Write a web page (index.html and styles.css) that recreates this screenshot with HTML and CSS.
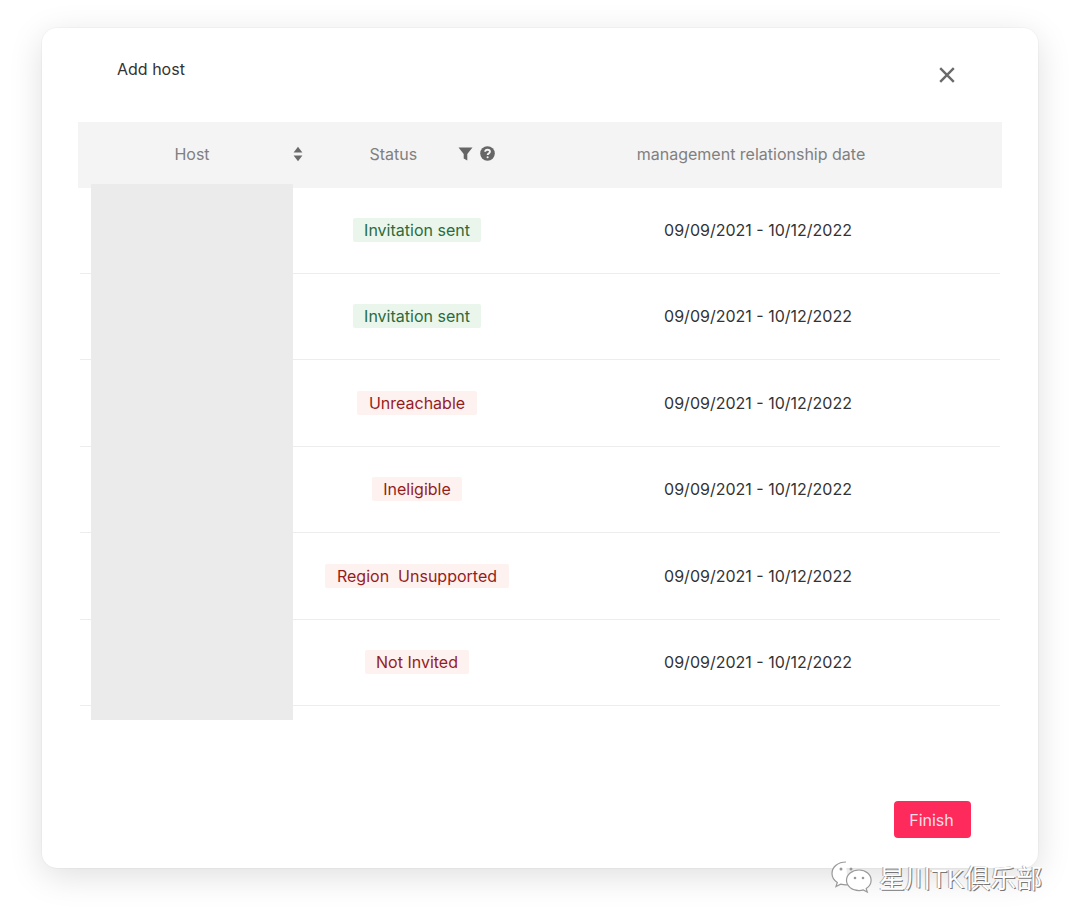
FILE: index.html
```html
<!DOCTYPE html>
<html lang="en">
<head>
<meta charset="utf-8">
<title>Add host</title>
<link rel="stylesheet" href="styles.css">
</head>
<body>
<main class="modal">
  <header class="modal-head">
    <h1 class="modal-title">Add host</h1>
    <svg class="close" viewBox="0 0 16 16" width="16" height="16" aria-hidden="true"><path d="M1.2 1.200 14.800 14.800M14.800 1.200 1.200 14.800"/></svg>
  </header>
  <section class="table">
    <div class="row head">
      <div class="cell host-head"><span>Host</span>
        <svg class="sort" viewBox="0 0 10 16" width="10" height="16" aria-hidden="true"><path d="M5 .8 9.400 6.600H.6ZM5 15.200.6 9.400h8.800Z"/></svg>
      </div>
      <div class="cell status-head"><span>Status</span>
        <svg class="filter" viewBox="0 0 14 14" width="15" height="14" aria-hidden="true"><path d="M0 .5h14L8.800 7V13.500L5.200 11.500V7Z"/></svg>
        <svg class="help" viewBox="0 0 16 16" width="15" height="15" aria-hidden="true"><circle cx="8" cy="8" r="7.800"/><path class="q" d="M5.500 6.200C5.600 4.700 6.600 4 8 4c1.500 0 2.600.8 2.600 2.100 0 1.800-2.500 1.700-2.500 3.500"/><circle class="dot" cx="8.100" cy="12" r="1.100"/></svg>
      </div>
      <div class="cell date-head">management relationship date</div>
    </div>
    <div class="row"><div class="cell"></div><div class="cell status"><span class="tag ok">Invitation sent</span></div><div class="cell date">09/09/2021 - 10/12/2022</div></div>
    <div class="row"><div class="cell"></div><div class="cell status"><span class="tag ok">Invitation sent</span></div><div class="cell date">09/09/2021 - 10/12/2022</div></div>
    <div class="row"><div class="cell"></div><div class="cell status"><span class="tag bad">Unreachable</span></div><div class="cell date">09/09/2021 - 10/12/2022</div></div>
    <div class="row"><div class="cell"></div><div class="cell status"><span class="tag bad">Ineligible</span></div><div class="cell date">09/09/2021 - 10/12/2022</div></div>
    <div class="row"><div class="cell"></div><div class="cell status"><span class="tag bad">Region&nbsp; Unsupported</span></div><div class="cell date">09/09/2021 - 10/12/2022</div></div>
    <div class="row"><div class="cell"></div><div class="cell status"><span class="tag bad">Not Invited</span></div><div class="cell date">09/09/2021 - 10/12/2022</div></div>
    <div class="redact"></div>
  </section>
  <footer class="modal-foot"><button class="finish" type="button">Finish</button></footer>
</main>
<div class="watermark">
  <svg class="wx" viewBox="0 0 44 36" width="44" height="36" aria-hidden="true">
    <path d="M16 3C8 3 2 8 2 14.500c0 3.800 2 6.800 5.300 9l-1.300 4 4.600-2.400c1.800.5 3.500.8 5.400.8.600 0 1 0 1.600-.1"/>
    <path d="M29 11c-7 0-12.500 4.600-12.500 10.300S22 31.600 29 31.600c1.500 0 3-.2 4.300-.7l4 2.200-1.100-3.500c3-2 4.900-4.900 4.900-8.300C41.100 15.600 36 11 29 11Z"/>
    <circle cx="11" cy="10" r="1.500"/><circle cx="21" cy="10" r="1.500"/><circle cx="25" cy="19" r="1.300"/><circle cx="33" cy="19" r="1.300"/>
  </svg>
  <span class="wm-text">星川TK俱乐部</span>
</div>
</body>
</html>
```
FILE: styles.css
```css
* { box-sizing: border-box; }
html, body { margin: 0; padding: 0; }
body {
  width: 1080px;
  height: 924px;
  padding: 28px 42px 0;
  background: #fff;
  font-family: Inter, "Liberation Sans", sans-serif;
  font-size: 16px;
  color: #333;
  position: relative;
  overflow: hidden;
}
.modal {
  width: 996px;
  height: 840px;
  background: #fff;
  border-radius: 15px;
  box-shadow: 0 0 0 1px rgba(0, 0, 0, .025), 0 8px 34px rgba(0, 0, 0, .13);
  padding: 0 36px;
  display: flex;
  flex-direction: column;
}
.modal-head {
  height: 94px;
  display: flex;
  justify-content: space-between;
  padding: 31px 47px 0 39px;
}
.modal-title { margin: 0; font-size: 16px; font-weight: 400; line-height: 20px; color: #333; }
.close { margin-top: 8px; fill: none; stroke: #6a6a6a; stroke-width: 2.400; }
.table { position: relative; }
.row {
  display: grid;
  grid-template-columns: 228px 224px 1fr;
  height: 86.500px;
  padding-bottom: 2px;
  border-bottom: 1px solid transparent;
  background: linear-gradient(#ededed, #ededed) 2px 100% / 920px 1px no-repeat;
  align-items: center;
}
.row.head { height: 66px; padding-bottom: 2px; background: #f4f4f4; color: #808080; }
.cell { display: flex; align-items: center; justify-content: center; }
.host-head { position: relative; }
.sort { position: absolute; left: 215px; top: 2px; fill: #6a6a6a; }
.status-head { justify-content: flex-start; padding-left: 63.500px; }
.filter { margin-left: 41px; fill: #666; }
.help { margin-left: 7px; fill: #666; }
.help .q { fill: none; stroke: #f4f4f4; stroke-width: 2; }
.help .dot { fill: #f4f4f4; }
.date-head { padding-right: 30px; }
.date { padding-right: 16px; color: #333; }
.tag { margin-left: -2px; padding: 0 11.500px; height: 24px; line-height: 24px; border-radius: 2px; white-space: nowrap; }
.tag.ok { background: #eaf6ec; color: #2c6b3b; }
.tag.bad { background: #fdf2ef; color: #961c1c; }
.redact { position: absolute; left: 13px; top: 62px; width: 202px; height: 536px; background: #ebebeb; }
.modal-foot { margin-top: auto; display: flex; justify-content: flex-end; padding: 0 31px 30px 0; }
.finish {
  width: 77px; height: 37px; border: 0; border-radius: 4px; padding: 0 2px 0 0;
  background: #ff2a5c; color: #ffdfe7;
  font: 400 16px Inter, "Liberation Sans", sans-serif;
}
.watermark { position: absolute; left: 830px; top: 858px; display: flex; align-items: center; gap: 5px; }
.wx { fill: #fff; stroke: #999; stroke-width: 1.200; }
.wx circle { fill: #999; stroke: none; }
.wm-text {
  font-family: "Liberation Sans", "Noto Sans CJK SC", sans-serif;
  font-size: 26px;
  color: #fff;
  text-shadow: 1px 1px 0 #777, -1px 0 0 #aaa;
  white-space: nowrap;
}
```
